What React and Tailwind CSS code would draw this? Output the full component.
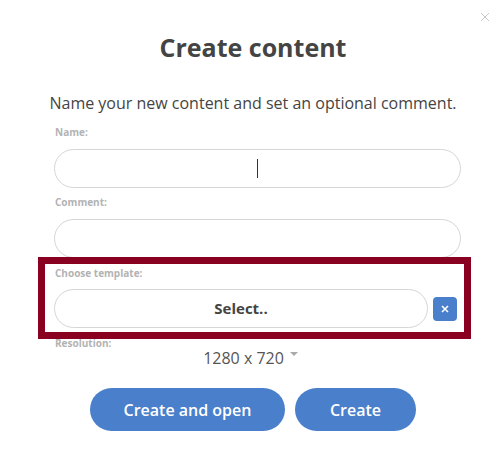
import React from "react";

export default function App() {
  return (
    <div className="relative w-[501px] h-[467px] bg-white overflow-hidden" style={{ fontFamily: '"Open Sans", "Noto Sans", sans-serif' }}>
      {/* close */}
      <div className="absolute left-[480px] top-[12px] w-[10px] h-[10px]">
        <svg width="10" height="10" viewBox="0 0 10 10">
          <path d="M1 1 L9 9 M9 1 L1 9" stroke="#c8c8c8" strokeWidth="1" />
        </svg>
      </div>

      <div className="pt-[29px] pl-[5px] flex flex-col items-center">
        <h1 className="text-[25px] leading-[36px] font-bold text-[#444]">Create content</h1>
        <p className="mt-[26px] text-[16px] leading-[24px] text-[#444]">Name your new content and set an optional comment.</p>
      </div>

      <div className="pl-[54px] pr-[40px] mt-[10px] flex flex-col">
        <div className="text-[10px] leading-[14px] font-bold text-[#b3b3b3] pl-[1px]">Name:</div>
        <div className="mt-[10px] h-[39px] rounded-full border border-[#d6d6d6] flex items-center justify-center">
          <span className="w-px h-[19px] bg-[#333]" />
        </div>
        <div className="mt-[7px] text-[10px] leading-[14px] font-bold text-[#b3b3b3] pl-[1px]">Comment:</div>
        <div className="mt-[10px] h-[39px] rounded-full border border-[#d6d6d6]" />
        <div className="mt-[8px] text-[10px] leading-[14px] font-bold text-[#b3b3b3] pl-[1px]">Choose template:</div>
        <div className="mt-[9px] flex items-center gap-[5px]">
          <div className="w-[374px] h-[39px] rounded-full border border-[#d6d6d6] flex items-center justify-center text-[15px] font-bold text-[#444]">
            Select..
          </div>
          <div className="w-[24px] h-[24px] rounded-[4px] bg-[#4a7fcb] flex items-center justify-center">
            <svg width="8" height="8" viewBox="0 0 8 8">
              <path d="M1 1 L7 7 M7 1 L1 7" stroke="#fff" strokeWidth="1.6" />
            </svg>
          </div>
        </div>
        <div className="mt-[8px] text-[10px] leading-[14px] font-bold text-[#b3b3b3] pl-[1px]">Resolution:</div>
        <div className="-mt-[2px] flex items-center justify-center pr-[14px]">
          <span className="text-[16px] leading-[20px] text-[#555]">1280 x 720</span>
          <svg className="ml-[6px] -mt-[8px]" width="8" height="5" viewBox="0 0 8 5">
            <path d="M0 0 L8 0 L4 4 Z" fill="#aaa" />
          </svg>
        </div>
      </div>

      <div className="mt-[20px] pl-[5px] flex justify-center gap-[10px]">
        <button className="w-[195px] h-[43px] rounded-full bg-[#4a7fcb] text-white text-[16px] font-semibold">Create and open</button>
        <button className="w-[121px] h-[43px] rounded-full bg-[#4a7fcb] text-white text-[16px] font-semibold">Create</button>
      </div>

      {/* highlight overlay */}
      <div className="absolute left-[38px] top-[257px] w-[433px] h-[82px] border-[7px] border-[#8a0020] pointer-events-none" />
    </div>
  );
}
